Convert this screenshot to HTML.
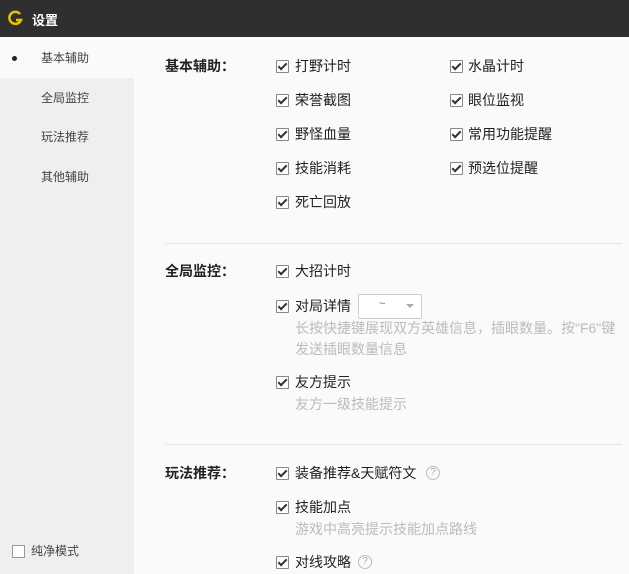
<!DOCTYPE html><html><head><meta charset="utf-8"><style>
body{margin:0;width:629px;height:574px;overflow:hidden;background:#fafafa;font-family:"Liberation Sans","Noto Sans CJK SC",sans-serif;font-size:14px;color:#222;position:relative}
.a{position:absolute;white-space:nowrap}
#top{left:0;top:0;width:629px;height:37px;background:#2f2f2f}
#side{left:0;top:37px;width:134px;height:537px;background:#efefef}
.cb{position:absolute;width:11px;height:11px;border:1px solid #888;background:#fff;border-radius:1px}
.cb:after{content:"";position:absolute;left:3px;top:0px;width:3px;height:7px;border:solid #333;border-width:0 2px 2px 0;transform:rotate(45deg)}
.t{line-height:16px}
.d{color:#bbb;line-height:16px}
.hr{position:absolute;left:165px;width:457px;height:1px;background:#e4e4e4}
.q{position:absolute;width:12px;height:12px;border:1px solid #bbb;border-radius:50%;color:#aaa;font-size:10px;text-align:center;line-height:12px}
</style></head><body>
<div class="a" id="top"></div>
<svg class="a" style="left:8px;top:10px" width="16" height="16" viewBox="0 0 16 16"><path d="M12 4A6 6 0 1 0 13 10H8" fill="none" stroke="#e8c400" stroke-width="2.5"/></svg>
<div class="a" style="left:32px;top:10px;color:#fff;font-weight:bold;font-size:13px">设置</div>
<div class="a" id="side"></div>
<div class="a" style="left:0;top:37px;width:134px;height:41px;background:#fafafa"></div>
<div class="a" style="left:12px;top:56px;width:5px;height:5px;border-radius:50%;background:#222"></div>
<div class="a t" style="left:41px;top:50px;color:#444;font-size:12px">基本辅助</div>
<div class="a t" style="left:41px;top:90px;color:#444;font-size:12px">全局监控</div>
<div class="a t" style="left:41px;top:129px;color:#444;font-size:12px">玩法推荐</div>
<div class="a t" style="left:41px;top:169px;color:#444;font-size:12px">其他辅助</div>
<div class="a" style="left:12px;top:545px;width:11px;height:11px;border:1px solid #999;background:#fff"></div>
<div class="a t" style="left:31px;top:543px;font-size:12px;color:#444">纯净模式</div>

<div class="a t" style="left:165px;top:58px;font-weight:bold">基本辅助：</div>
<div class="cb" style="left:276px;top:60px"></div><div class="a t" style="left:295px;top:58px">打野计时</div>
<div class="cb" style="left:450px;top:60px"></div><div class="a t" style="left:468px;top:58px">水晶计时</div>
<div class="cb" style="left:276px;top:94px"></div><div class="a t" style="left:295px;top:92px">荣誉截图</div>
<div class="cb" style="left:450px;top:94px"></div><div class="a t" style="left:468px;top:92px">眼位监视</div>
<div class="cb" style="left:276px;top:128px"></div><div class="a t" style="left:295px;top:126px">野怪血量</div>
<div class="cb" style="left:450px;top:128px"></div><div class="a t" style="left:468px;top:126px">常用功能提醒</div>
<div class="cb" style="left:276px;top:162px"></div><div class="a t" style="left:295px;top:160px">技能消耗</div>
<div class="cb" style="left:450px;top:162px"></div><div class="a t" style="left:468px;top:160px">预选位提醒</div>
<div class="cb" style="left:276px;top:196px"></div><div class="a t" style="left:295px;top:194px">死亡回放</div>
<div class="hr" style="top:243px"></div>

<div class="a t" style="left:165px;top:263px;font-weight:bold">全局监控：</div>
<div class="cb" style="left:276px;top:265px"></div><div class="a t" style="left:295px;top:263px">大招计时</div>
<div class="cb" style="left:276px;top:300px"></div><div class="a t" style="left:295px;top:298px">对局详情</div>
<div class="a" style="left:358px;top:294px;width:62px;height:23px;border:1px solid #ccc;border-radius:2px;background:#fff"></div>
<div class="a" style="left:379px;top:298px;color:#777;font-size:11px">~</div>
<div class="a" style="left:406px;top:304px;border:4px solid transparent;border-top:4px solid #aaa"></div>
<div class="a d" style="left:295px;top:320px">长按快捷键展现双方英雄信息，插眼数量。按"F6"键</div>
<div class="a d" style="left:295px;top:341px">发送插眼数量信息</div>
<div class="cb" style="left:276px;top:376px"></div><div class="a t" style="left:295px;top:374px">友方提示</div>
<div class="a d" style="left:295px;top:396px">友方一级技能提示</div>
<div class="hr" style="top:444px"></div>

<div class="a t" style="left:165px;top:465px;font-weight:bold">玩法推荐：</div>
<div class="cb" style="left:276px;top:467px"></div><div class="a t" style="left:295px;top:465px">装备推荐&amp;天赋符文</div>
<div class="q" style="left:426px;top:466px">?</div>
<div class="cb" style="left:276px;top:501px"></div><div class="a t" style="left:295px;top:499px">技能加点</div>
<div class="a d" style="left:295px;top:521px">游戏中高亮提示技能加点路线</div>
<div class="cb" style="left:276px;top:556px"></div><div class="a t" style="left:295px;top:554px">对线攻略</div>
<div class="q" style="left:358px;top:555px">?</div>
</body></html>
